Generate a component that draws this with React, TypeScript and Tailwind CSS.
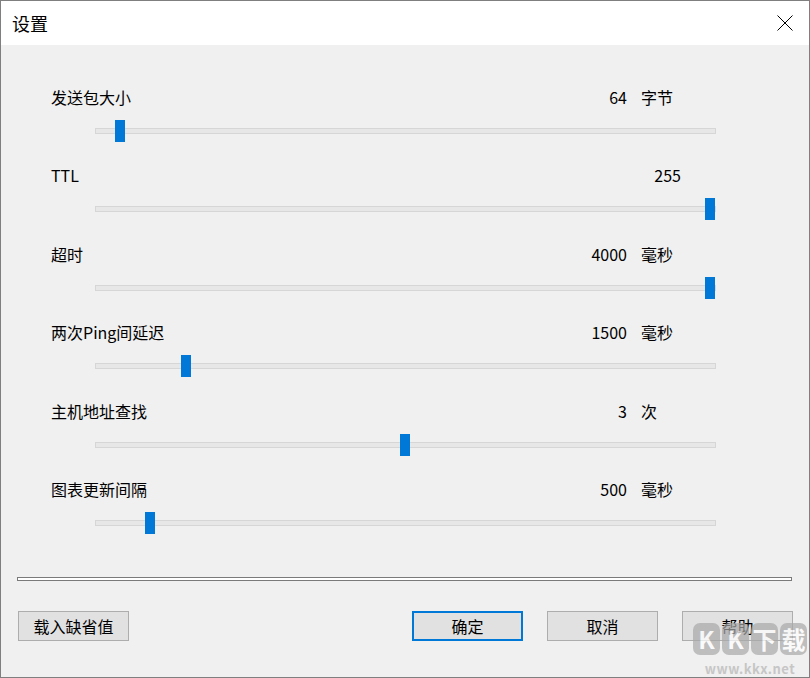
import React from "react";

type Row = { label: string; value: string; unit?: string; pos: number; wide?: boolean };

const rows: Row[] = [
  { label: "发送包大小", value: "64", unit: "字节", pos: 25 },
  { label: "TTL", value: "255", pos: 615, wide: true },
  { label: "超时", value: "4000", unit: "毫秒", pos: 615 },
  { label: "两次Ping间延迟", value: "1500", unit: "毫秒", pos: 91 },
  { label: "主机地址查找", value: "3", unit: "次", pos: 310 },
  { label: "图表更新间隔", value: "500", unit: "毫秒", pos: 55 },
];

function Slider({ pos }: { pos: number }) {
  return (
    <div className="relative ml-[94px] h-[22px] w-[621px] flex items-center">
      <div className="h-[6px] w-full border border-[#d6d6d6] bg-[#e7e7e7]" />
      <div
        className="absolute top-0 h-[22px] w-[10px] bg-[#0078d7]"
        style={{ left: pos - 5 }}
      />
    </div>
  );
}

function Btn({ children, primary }: { children: React.ReactNode; primary?: boolean }) {
  return (
    <div
      className={
        primary
          ? "flex h-[30px] w-[111px] items-center justify-center border-2 border-[#0078d7] bg-[#e1e1e1] text-[16px] text-black"
          : "flex h-[30px] w-[111px] items-center justify-center border border-[#adadad] bg-[#e1e1e1] text-[16px] text-black"
      }
    >
      {children}
    </div>
  );
}

const marks = ["K", "K", "下", "载"];

export default function App() {
  return (
    <div
      className="relative h-[678px] w-[810px] overflow-hidden border border-[#7f7f7f] bg-[#f0f0f0]"
      style={{ fontFamily: '"Noto Sans CJK SC", "Noto Sans", sans-serif' }}
    >
      <div className="flex h-[44px] items-center justify-between bg-white pl-[11px] pr-[16px]">
        <span className="text-[18px] text-black">设置</span>
        <svg width="16" height="16" viewBox="0 0 16 16" className="block">
          <path d="M0.5 0.5 L15.5 15.5 M15.5 0.5 L0.5 15.5" stroke="#000" strokeWidth="1" fill="none" />
        </svg>
      </div>

      <div className="flex flex-col gap-[22.4px] pt-[41px]">
        {rows.map((r) => (
          <div key={r.label} className="flex flex-col gap-[12px]">
            <div className="flex h-[22px] items-center pl-[50px] text-[16px] leading-[22px] text-black">
              <div
                className={
                  r.wide
                    ? "flex w-[630px] items-center justify-between"
                    : "flex w-[576px] items-center justify-between"
                }
              >
                <span>{r.label}</span>
                <span>{r.value}</span>
              </div>
              {r.unit && <span className="ml-[14px]">{r.unit}</span>}
            </div>
            <Slider pos={r.pos} />
          </div>
        ))}
      </div>

      <div className="ml-[16px] mt-[43px] h-[4px] w-[775px] border border-[#7a7a7a] bg-white" />

      <div className="mt-[30px] flex items-center pl-[17px]">
        <Btn>载入缺省值</Btn>
        <div className="ml-[283px] flex gap-[24px]">
          <Btn primary>确定</Btn>
          <Btn>取消</Btn>
          <Btn>帮助</Btn>
        </div>
      </div>

      <div className="pointer-events-none absolute bottom-[2px] right-[2px] flex flex-col items-center opacity-70">
        <div className="flex gap-[2px]">
          {marks.map((m, i) => (
            <div
              key={i}
              className="flex h-[32px] w-[27px] items-center justify-center rounded-[7px] bg-[#a9a9a9] text-[24px] font-bold leading-none text-white"
            >
              {m}
            </div>
          ))}
        </div>
        <span className="mt-[8px] text-[13px] font-bold leading-[12px] tracking-[0.5px] text-[#b5b5b5]">www.kkx.net</span>
      </div>
    </div>
  );
}
